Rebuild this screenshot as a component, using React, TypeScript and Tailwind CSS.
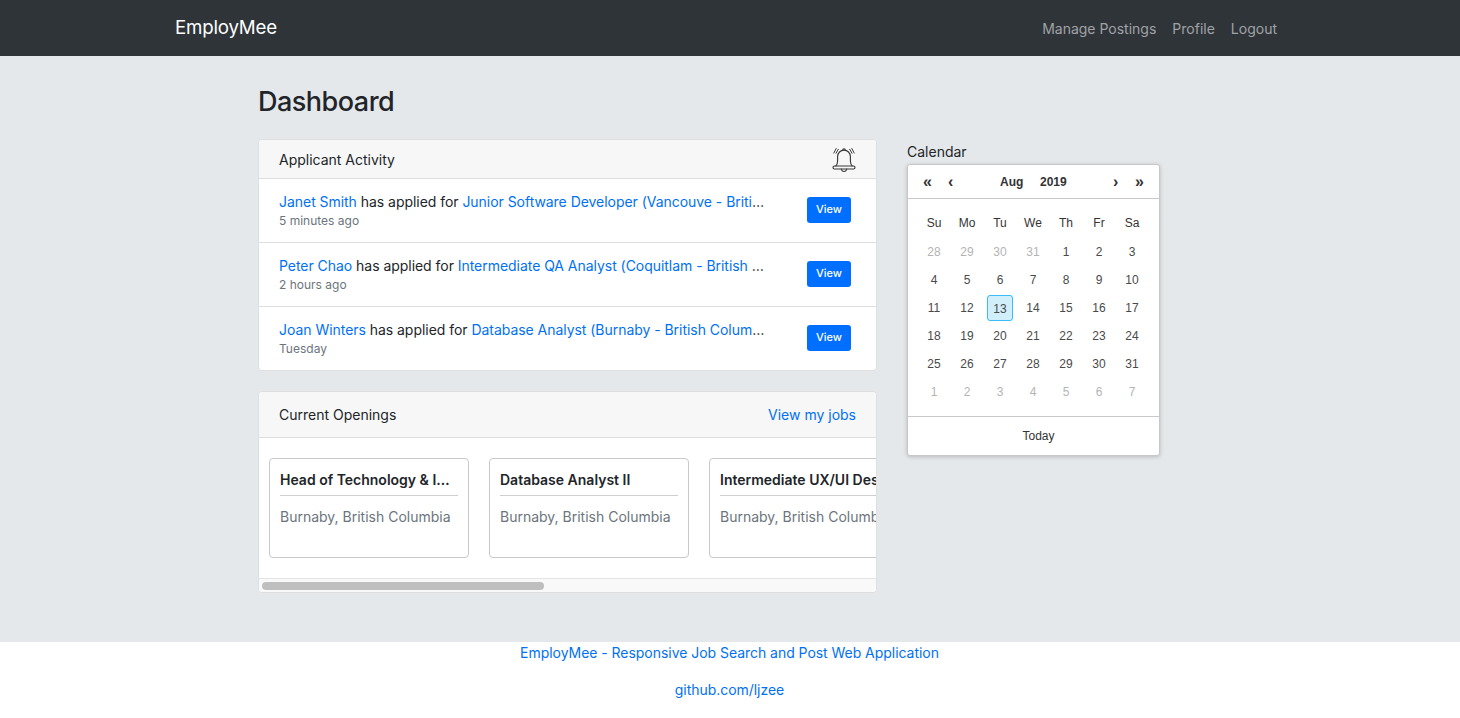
import React from "react";

const activity = [
  { name: "Janet Smith", job: "Junior Software Developer (Vancouve - British Columbia)", when: "5 minutes ago" },
  { name: "Peter Chao", job: "Intermediate QA Analyst (Coquitlam - British Columbia)", when: "2 hours ago" },
  { name: "Joan Winters", job: "Database Analyst (Burnaby - British Columbia)", when: "Tuesday" },
];

const openings = [
  "Head of Technology & Innovation",
  "Database Analyst II",
  "Intermediate UX/UI Designer",
];

const days = ["Su", "Mo", "Tu", "We", "Th", "Fr", "Sa"];
const cells: { d: number; muted?: boolean; today?: boolean }[] = [
  ...[28, 29, 30, 31].map((d) => ({ d, muted: true })),
  ...Array.from({ length: 31 }, (_, i) => ({ d: i + 1, today: i + 1 === 13 })),
  ...[1, 2, 3, 4, 5, 6, 7].map((d) => ({ d, muted: true })),
];

function Bell() {
  return (
    <svg width="26" height="27" viewBox="0 0 26 27" fill="none" stroke="#3a3a3a" strokeWidth="1.150" strokeLinecap="round" strokeLinejoin="round">
      <path d="M4.800 20c1.400-1.300 1.800-2.800 1.800-5.200V10.500a6.400 6.400 0 0 1 12.800 0v4.300c0 2.400.4 3.900 1.800 5.200" />
      <rect x="2" y="20" width="22" height="3" rx="1.500" />
      <path d="M10.300 23c.3 1.600 1.400 2.500 2.700 2.500s2.400-.9 2.700-2.500" />
      <path d="M11.700 4.200a1.300 1.300 0 0 1 2.600 0" />
      <path d="M5.200 2.500 2.800 7M7.300 3.300 5 7.300M20.800 2.500l2.400 4.500M18.700 3.300 21 7.300" strokeWidth="1" />
    </svg>
  );
}

export default function App() {
  return (
    <div className="min-h-[718px] flex flex-col bg-white text-[#212529] font-['Inter','Liberation_Sans',sans-serif]">
      <nav className="h-14 bg-[#2f3439] flex items-center justify-between pl-[175px] pr-[183px]">
        <a className="text-[18.700px] text-white tracking-[-0.2px] pt-[1px]">EmployMee</a>
        <div className="flex gap-4 text-[14px] text-[#a0a3a6]">
          <a>Manage Postings</a>
          <a>Profile</a>
          <a>Logout</a>
        </div>
      </nav>

      <main className="h-[586px] bg-[#e5e8eb] pl-[258px] pt-[29px]">
        <h1 className="text-[27px] leading-[34px] font-medium tracking-[-0.5px]">Dashboard</h1>
        <div className="flex gap-[30px] mt-[20px] items-start">
          <div className="w-[619px] flex flex-col gap-5">
            <section className="bg-white rounded border border-[#dfdfdf] overflow-hidden">
              <header className="h-[39px] bg-[#f7f7f7] border-b border-[#dfdfdf] flex items-center justify-between pl-5 pr-[19px] text-[14px]">
                <span>Applicant Activity</span>
                <Bell />
              </header>
              {activity.map((a, i) => (
                <div key={a.name} className={`flex items-center pl-5 pr-[25px] ${i < 2 ? "h-16 border-b border-[#dfdfdf]" : "h-[63px]"}`}>
                  <div className="w-[488px] mr-[40px]">
                    <p className="truncate text-[14px] leading-[20px] tracking-[-0.04px] text-[#212529]">
                      <a className="text-[#0071f5]">{a.name}</a> has applied for <a className="text-[#0071f5]">{a.job}</a>
                    </p>
                    <p className="text-[12px] leading-[18px] text-[#6c757d]">{a.when}</p>
                  </div>
                  <button className="w-[44px] h-[26px] mb-[2px] rounded-[3px] bg-[#006fff] text-white text-[11px] font-medium">View</button>
                </div>
              ))}
            </section>

            <section className="bg-white rounded border border-[#dfdfdf] overflow-hidden">
              <header className="h-[46px] bg-[#f7f7f7] border-b border-[#dfdfdf] flex items-center justify-between pl-5 pr-5 text-[14px]">
                <span>Current Openings</span>
                <a className="text-[#0071f5]">View my jobs</a>
              </header>
              <div className="flex gap-5 overflow-hidden pl-[10px] pt-5 pb-5">
                {openings.map((t) => (
                  <div key={t} className="w-[200px] h-[100px] shrink-0 rounded border border-[#c9c9c9] px-[10px] pt-[11px]">
                    <h3 className="truncate text-[14px] leading-[20px] font-semibold pb-[5px] border-b border-[#cfcfcf] w-[178px] whitespace-nowrap">{t}</h3>
                    <p className="mt-[11px] text-[14px] leading-[20px] text-[#6c757d] whitespace-nowrap">Burnaby, British Columbia</p>
                  </div>
                ))}
              </div>
              <div className="h-[14px] bg-[#f9f9f9] border-t border-[#e4e4e4] pl-[3px] pt-[3px]">
                <div className="w-[282px] h-2 rounded-full bg-[#bfbfbf]" />
              </div>
            </section>
          </div>

          <aside className="w-[253px] -mt-[1px]">
            <div className="text-[14px] leading-[18px] mb-[3px] mt-[5px]">Calendar</div>
            <div className="bg-white rounded-[3px] border border-[#c8c8c8] shadow-[0_1px_4px_rgba(0,0,0,0.2)] h-[292px] flex flex-col font-['Liberation_Sans',sans-serif] text-[12px]">
              <div className="h-[34px] shrink-0 border-b border-[#c8c8c8] flex items-center pl-[15px] font-bold text-[#333]">
                <span className="w-[25px] text-[16px]">«</span>
                <span className="w-[52px] text-[16px]">‹</span>
                <span className="w-[40px]">Aug</span>
                <span className="w-[73px]">2019</span>
                <span className="w-[22px] text-[16px]">›</span>
                <span className="text-[16px]">»</span>
              </div>
              <div className="flex-1 pl-[9.500px] pt-[10px]">
                <div className="grid grid-cols-[repeat(7,33px)] h-[29px] pb-[1px] text-center items-center justify-items-center text-[#333]">
                  {days.map((d) => (
                    <div key={d}>{d}</div>
                  ))}
                </div>
                <div className="grid grid-cols-[repeat(7,33px)] auto-rows-[28px] text-center items-center justify-items-center text-[#4a4a4a]">
                  {cells.map((c, i) => (
                    <div
                      key={i}
                      className={
                        c.today
                          ? "w-[26px] h-[26px] flex items-center justify-center rounded-[3px] bg-[#d1eefb] border border-[#38bdf8] pt-[2px]"
                          : c.muted
                          ? "text-[#b4b4b4]"
                          : ""
                      }
                    >
                      {c.d}
                    </div>
                  ))}
                </div>
              </div>
              <div className="h-[39px] shrink-0 border-t border-[#c8c8c8] flex items-center justify-center pl-[10px] text-[#333]">Today</div>
            </div>
          </aside>
        </div>
      </main>

      <footer className="h-[76px] bg-white text-center text-[14px] tracking-[-0.04px] text-[#0071f5] pr-[1px]">
        <p className="leading-[21px] pb-[16px]">EmployMee - Responsive Job Search and Post Web Application</p>
        <p className="leading-[21px]">github.com/ljzee</p>
      </footer>
    </div>
  );
}
